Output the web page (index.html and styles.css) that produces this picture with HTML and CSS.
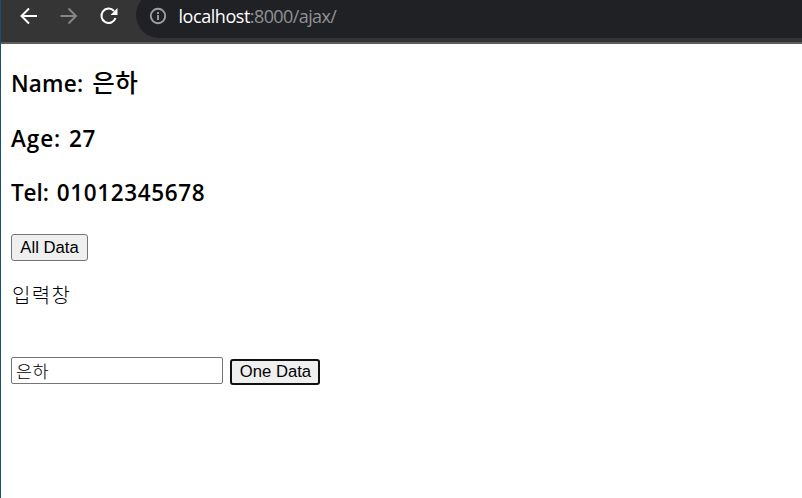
FILE: index.html
```html
<!DOCTYPE html>
<html lang="ko">
<head>
<meta charset="utf-8">
<title>ajax</title>
<link rel="stylesheet" href="styles.css">
</head>
<body>
<div class="window">
  <header class="toolbar">
    <nav class="nav">
      <svg class="icon" viewBox="0 0 20 20"><path d="M19 10H4M11 2.500 3.500 10l7.500 7.500"/></svg>
      <svg class="icon dim" viewBox="0 0 20 20"><path d="M2.500 10h15M10.500 2.500 18 10 10.500 17.500"/></svg>
      <svg class="icon" viewBox="0 0 20 20"><path d="M16 5A7.200 7.200 0 1 0 17.500 12"/><path class="fill" d="M19.500 2v7h-7z"/></svg>
    </nav>
    <div class="address">
      <svg class="info" viewBox="0 0 18 18"><circle cx="9" cy="9" r="7.200"/><path d="M9 8v5M9 5v2"/></svg>
      <span class="url"><b class="host">localhost</b>:8000/ajax/</span>
    </div>
  </header>
  <main class="page">
    <h3 class="line"><span class="name">Name:</span> <span class="korean">은하</span></h3>
    <h3 class="line"><span class="age">Age:</span> <span class="number">27</span></h3>
    <h3 class="line"><span class="tel">Tel:</span> <span class="number">01012345678</span></h3>
    <button class="button all">All Data</button>
    <p class="caption">입력창</p>
    <div class="form">
      <input class="field" type="text" value="은하">
      <button class="button one">One Data</button>
    </div>
  </main>
</div>
</body>
</html>
```
FILE: styles.css
```css
* { box-sizing: border-box; }
body {
  margin: 0;
  background: #fff;
  color: #000;
  font-family: "Open Sans", "Noto Sans CJK KR", sans-serif;
}
.window { height: 498px; border-left: 1px solid #15527a; overflow: hidden; }
.toolbar {
  display: flex;
  height: 44px;
  background: #353535;
  border-bottom: 2px solid #5f5d5e;
}
.nav { display: flex; gap: 20px; padding: 6px 0 0 17px; width: 135px; }
.icon { width: 20px; height: 20px; flex: none; fill: none; stroke: #fff; stroke-width: 2; }
.icon.dim { stroke: #858585; }
.icon .fill { fill: #fff; stroke: none; }
.address {
  display: flex;
  flex: 1;
  height: 46px;
  margin-top: -8px;
  padding: 15px 0 0 13px;
  background: #202124;
  border-radius: 23px 0 0 23px;
}
.info { width: 18px; height: 18px; fill: none; stroke: #9aa0a6; stroke-width: 1.9; }
.url { margin: -3px 0 0 11.500px; color: #8f9296; font-size: 18px; line-height: 24px; white-space: nowrap; letter-spacing: -0.600px; }
.host { color: #fff; font-weight: 400; letter-spacing: -0.450px; }
.page { padding: 22px 10px 0; }
.line { display: flex; align-items: center; gap: 8px; height: 34px; margin: 0 0 21px; font-size: 22.500px; font-weight: 600; white-space: nowrap; }
.line:nth-of-type(2) { margin-bottom: 20px; }
.line:nth-of-type(3) { margin-bottom: 25px; }
.name { letter-spacing: 0.200px; }
.age { letter-spacing: 0.900px; }
.tel { letter-spacing: -0.100px; }
.number { letter-spacing: 0.650px; }
.korean { margin: -4px 0 0 1px; font-family: "Noto Sans CJK KR", sans-serif; font-size: 24.500px; font-weight: 500; letter-spacing: 0.500px; }
.button {
  display: block;
  height: 27px;
  margin: 0;
  padding: 0;
  border: 1px solid #767676;
  border-radius: 3px;
  background: #efefef;
  color: #000;
  font: 16.670px/25px "Liberation Sans", Arial, sans-serif;
}
.all { width: 77px; }
.caption { margin: 18px 0 0 1px; font: 300 20px/32px "Noto Sans CJK KR", sans-serif; letter-spacing: 1.300px; }
.form { display: flex; gap: 7px; margin-top: 46px; }
.field {
  width: 212px;
  height: 27px;
  padding: 0 4px;
  border: 1px solid #767676;
  border-radius: 2px;
  background: #fff;
  color: #000;
  font: 300 17.500px/25px "Noto Sans CJK KR", sans-serif;
  letter-spacing: 0.500px;
}
.one { width: 90px; height: 26px; margin-top: 2px; padding: 0 0 0 1px; border: 2px solid #101010; line-height: 20px; }
```
